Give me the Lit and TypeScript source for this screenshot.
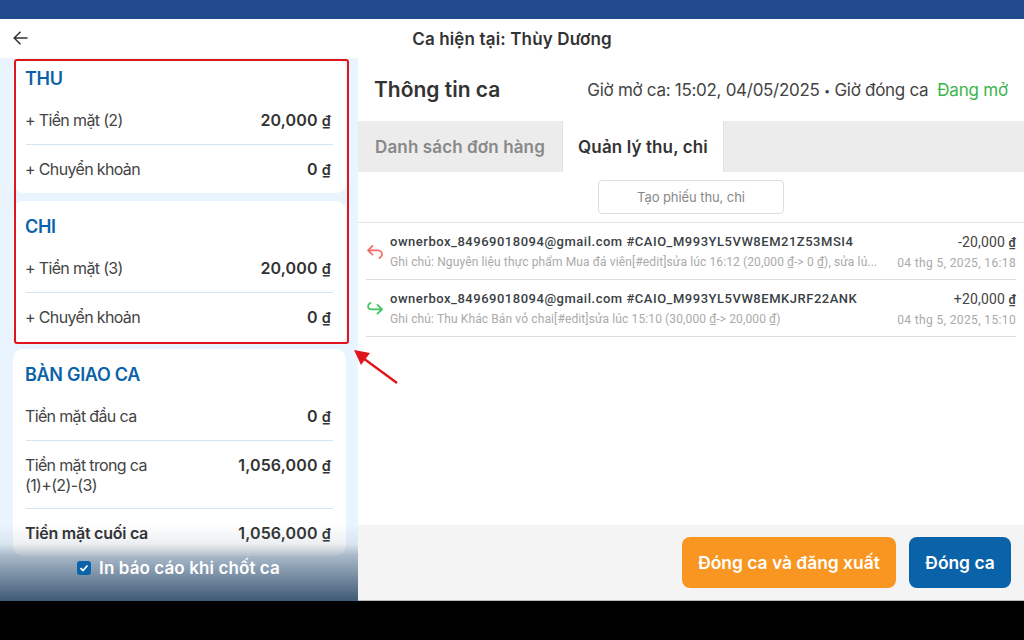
import { LitElement, html, css, svg } from "lit";
import { customElement } from "lit/decorators.js";

const dong = html`<span class="d">₫</span>`;

@customElement("app-root")
export class AppRoot extends LitElement {
  static styles = css`
    :host { display: block; width: 1024px; height: 640px; background: #000; font-family: Inter, "Noto Sans", sans-serif; color: #333; position: relative; overflow: hidden; }
    .top { height: 19px; background: #214a8d; border-bottom: 1px solid #d5e3f5; margin-bottom: -1px; }
    .header { height: 39px; background: #fff; display: flex; align-items: center; justify-content: center; position: relative; font-size: 17px; font-weight: 600; letter-spacing: 0.14px; color: #333; box-sizing: border-box; }
    .back { position: absolute; left: 13px; top: 12px; }
    .body { display: flex; height: 543px; }
    .left { width: 358px; background: #eaf4fe; box-sizing: border-box; padding: 2px 12px 0 13px; position: relative; overflow: hidden; flex: none; }
    .card { background: #fff; border-radius: 10px; padding: 8px 13px 0 13px; margin-bottom: 8px; }
    .card.second { padding: 15px 13px 2px 13px; margin-bottom: 6px; }
    .card.c3 { margin: 0; padding: 15px 13px 0 13px; height: 207px; box-sizing: border-box; }
    .card h3 { margin: 0 0 0 -1px; font-size: 18px; line-height: 22px; font-weight: 600; color: #0a62a9; letter-spacing: -0.3px; }
    .row { display: flex; justify-content: space-between; align-items: center; height: 48px; font-size: 16px; color: #444; letter-spacing: -0.65px; }
    .row > span { margin-left: -1px; }
    .row + .row { border-top: 1px solid #d4e5f2; }
    .row b { font-weight: 600; color: #333; font-size: 16px; letter-spacing: 0.15px; padding-right: 2px; }
    .card h3 + .row { margin-top: 6px; }
    .d { text-decoration: underline; text-decoration-color: #999; font-weight: 600; font-size: 0.9em; }
    .row.tall { height: 68px; align-items: flex-start; padding-top: 14px; box-sizing: border-box; line-height: 20px; }
    .row.last { font-weight: 600; color: #333; letter-spacing: -0.25px; }
    .fade { position: absolute; left: 0; right: 0; bottom: 0; height: 76px; background: linear-gradient(to bottom, rgba(63,90,117,0) 0%, rgba(63,90,117,.1) 25%, rgba(63,90,117,.38) 40%, #3f5a75 100%); display: flex; justify-content: center; padding-top: 31px; box-sizing: border-box; }
    .check { display: flex; align-items: center; gap: 8px; color: #fff; font-size: 17px; font-weight: 600; height: 24px; margin-left: -1px; letter-spacing: 0.1px; }
    .box { width: 14px; height: 14px; border-radius: 3px; background: #0a62a9; display: flex; align-items: center; justify-content: center; }
    .right { flex: 1; background: #fff; display: flex; flex-direction: column; min-width: 0; }
    .info { height: 63px; display: flex; align-items: center; justify-content: space-between; padding: 0 16px; flex: none; }
    .info h2 { margin: 0; font-size: 21px; font-weight: 600; color: #333; }
    .meta { font-size: 17px; color: #444; display: flex; gap: 9px; letter-spacing: -0.29px; }
    .dot { font-size: 11px; vertical-align: 1px; }
    .open { color: #3bb54a; letter-spacing: -0.2px; }
    .tabs { height: 51px; background: #ececec; display: flex; flex: none; }
    .tab { display: flex; align-items: center; justify-content: center; font-size: 17px; font-weight: 600; color: #888; width: 204px; box-sizing: border-box; letter-spacing: 0.12px; }
    .tab.on { background: #fff; color: #333; width: 162px; border-left: 1px solid #e2e2e2; border-right: 1px solid #e2e2e2; }
    .create-wrap { display: flex; justify-content: center; padding-top: 8px; height: 51px; box-sizing: border-box; border-bottom: 1px solid #e4e4e4; flex: none; }
    .create { width: 186px; height: 34px; border: 1px solid #ddd; border-radius: 4px; box-sizing: border-box; display: flex; align-items: center; justify-content: center; font-size: 13px; color: #888; letter-spacing: -0.08px; }
    .list { flex: 1; padding: 0 8px; font-family: Roboto, sans-serif; }
    .item { display: flex; align-items: flex-start; height: 57px; border-bottom: 1px solid #ddd; box-sizing: border-box; }
    .ic { width: 24px; flex: none; display: flex; padding: 22px 0 0 1px; box-sizing: border-box; }
    .mid { flex: 1; min-width: 0; padding-top: 9px; }
    .l1 { font-size: 13px; font-weight: 500; color: #3a3f45; letter-spacing: 0.52px; line-height: 20px; }
    .l2 { font-size: 12px; color: #aaa; letter-spacing: 0.12px; line-height: 18px; margin-top: 1px; white-space: nowrap; }
    .end { text-align: right; flex: none; width: 130px; margin-left: 8px; padding-top: 9px; }
    .end .l1 { font-weight: 400; font-size: 14px; color: #444; letter-spacing: 0.15px; }
    .end .l2 { letter-spacing: 0.37px; }
    .foot { height: 76px; background: #f4f4f4; display: flex; justify-content: flex-end; align-items: center; gap: 13px; padding: 0 13px 0 0; flex: none; border-bottom: 1px solid #bbb; box-sizing: border-box; }
    .btn { height: 51px; border-radius: 8px; display: flex; align-items: center; justify-content: center; color: #fff; font-size: 17.4px; font-weight: 600; }
    .orange { width: 214px; background: #f99621; }
    .blue { width: 102px; background: #0a62a9; }
    .frame { position: absolute; left: 14px; top: 59px; width: 335px; height: 285px; border: 2px solid #e0161c; border-radius: 3px; box-sizing: border-box; pointer-events: none; }
    .arrow { position: absolute; left: 350px; top: 345px; }
  `;

  render() {
    return html`
      <div class="top"></div>
      <div class="header">
        <svg class="back" width="15" height="14" viewBox="0 0 15 14" fill="none" stroke="#333" stroke-width="1.5"><path d="M14.5 7H1.5M7.5 .7 1.2 7 7.5 13.3"/></svg>
        Ca hiện tại: Thùy Dương
      </div>
      <div class="body">
        <div class="left">
          <div class="card">
            <h3>THU</h3>
            <div class="row"><span>+ Tiền mặt (2)</span><b>20,000 ${dong}</b></div>
            <div class="row"><span>+ Chuyển khoản</span><b>0 ${dong}</b></div>
          </div>
          <div class="card second">
            <h3>CHI</h3>
            <div class="row"><span>+ Tiền mặt (3)</span><b>20,000 ${dong}</b></div>
            <div class="row"><span>+ Chuyển khoản</span><b>0 ${dong}</b></div>
          </div>
          <div class="card c3">
            <h3>BÀN GIAO CA</h3>
            <div class="row"><span>Tiền mặt đầu ca</span><b>0 ${dong}</b></div>
            <div class="row tall"><span>Tiền mặt trong ca<br>(1)+(2)-(3)</span><b>1,056,000 ${dong}</b></div>
            <div class="row last"><span>Tiền mặt cuối ca</span><b>1,056,000 ${dong}</b></div>
          </div>
          <div class="fade">
            <div class="check">
              <span class="box"><svg width="10" height="10" viewBox="0 0 10 10" fill="none" stroke="#fff" stroke-width="1.7"><path d="M1.5 5.2 4 7.5 8.5 2.5"/></svg></span>
              In báo cáo khi chốt ca
            </div>
          </div>
        </div>
        <div class="right">
          <div class="info">
            <h2>Thông tin ca</h2>
            <div class="meta"><span>Giờ mở ca: 15:02, 04/05/2025 <span class="dot">•</span> Giờ đóng ca</span><span class="open">Đang mở</span></div>
          </div>
          <div class="tabs">
            <div class="tab">Danh sách đơn hàng</div>
            <div class="tab on">Quản lý thu, chi</div>
          </div>
          <div class="create-wrap"><div class="create">Tạo phiếu thu, chi</div></div>
          <div class="list">
            <div class="item">
              <div class="ic"><svg width="16" height="14" viewBox="0 0 16 14" fill="none" stroke="#f86a6a" stroke-width="1.7" stroke-linecap="round" stroke-linejoin="round"><path d="M5.5 .9 1 5.3l4.5 4.4M1 5.3h9.5c2.4 0 4.5 1.7 4.5 3.8 0 1.7-.9 3-2.6 3.9"/></svg></div>
              <div class="mid">
                <div class="l1">ownerbox_84969018094@gmail.com #CAIO_M993YL5VW8EM21Z53MSI4</div>
                <div class="l2">Ghi chú: Nguyên liệu thực phẩm Mua đá viên[#edit]sửa lúc 16:12 (20,000 ₫-> 0 ₫), sửa lú...</div>
              </div>
              <div class="end"><div class="l1">-20,000 ${dong}</div><div class="l2">04 thg 5, 2025, 16:18</div></div>
            </div>
            <div class="item">
              <div class="ic"><svg width="16" height="14" viewBox="0 0 16 14" fill="none" stroke="#3dc45c" stroke-width="1.7" stroke-linecap="round" stroke-linejoin="round"><path d="M3.4 1C1.8 1.9 1 3 1 4.2c0 1.8 1.9 3.1 4.2 3.1H15M10.5 2.9 15 7.3l-4.5 4.4"/></svg></div>
              <div class="mid">
                <div class="l1">ownerbox_84969018094@gmail.com #CAIO_M993YL5VW8EMKJRF22ANK</div>
                <div class="l2">Ghi chú: Thu Khác Bán vỏ chai[#edit]sửa lúc 15:10 (30,000 ₫-> 20,000 ₫)</div>
              </div>
              <div class="end"><div class="l1">+20,000 ${dong}</div><div class="l2">04 thg 5, 2025, 15:10</div></div>
            </div>
          </div>
          <div class="foot">
            <div class="btn orange">Đóng ca và đăng xuất</div>
            <div class="btn blue">Đóng ca</div>
          </div>
        </div>
      </div>
      <div class="frame"></div>
      <svg class="arrow" width="50" height="40" viewBox="0 0 50 40" fill="none">
        ${svg`<path d="M47 38 13 13" stroke="#e0161c" stroke-width="2.4"/><path d="M4 5 20 8 11 20Z" fill="#e0161c"/>`}
      </svg>
    `;
  }
}
